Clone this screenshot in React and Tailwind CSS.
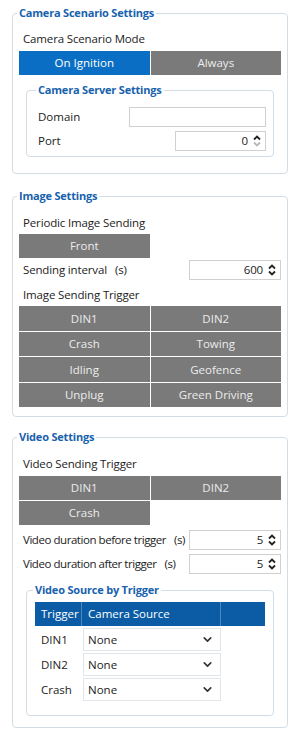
import { ChevronDown } from "lucide-react";

const font = { fontFamily: '"Open Sans", "Noto Sans", sans-serif' };

function Group({ title, className = "", children }) {
  return (
    <fieldset className={`rounded-[4px] border border-[#d3dde4] ${className}`}>
      <legend className="ml-[-2px] px-[2px] text-[11px] font-bold leading-[16px] tracking-[-0.2px] text-[#1862ad]">{title}</legend>
      {children}
    </fieldset>
  );
}

function Btn({ label, active }) {
  return (
    <div
      className={`flex h-[24px] items-center justify-center text-[11.5px] ${
        active ? "bg-[#0a6fc4] text-white" : "bg-[#7a7a7a] text-[#ececec]"
      }`}
    >
      {label}
    </div>
  );
}

function Spin({ value, min, w = "w-[92px]" }) {
  return (
    <div className={`flex h-[20px] ${w} shrink-0 items-center justify-end border border-[#d0d0d0] bg-white pr-[3px] text-[11.5px] text-[#222]`}>
      <span className="mr-[4px]">{value}</span>
      <svg width="10" height="14" viewBox="0 0 10 14">
        <path d="M2 5.5 L5 2.5 L8 5.5" fill="none" stroke="#222" strokeWidth="1.8" />
        <path d="M2 8.5 L5 11.5 L8 8.5" fill="none" stroke={min ? "#b8b8b8" : "#222"} strokeWidth="1.8" />
      </svg>
    </div>
  );
}

function Row({ label, unit, tight, children }) {
  return (
    <div
      className={`flex h-[20px] items-center justify-between pl-[4px] text-[11.5px] text-[#222] ${
        tight ? "tracking-[-0.45px]" : "tracking-[-0.15px]"
      }`}
    >
      <span className="min-w-0 whitespace-nowrap">
        {label}
        {unit && <span className="ml-[8px]">{unit}</span>}
      </span>
      {children}
    </div>
  );
}

function Label({ children, className = "" }) {
  return <div className={`pl-[4px] text-[11.5px] leading-[16px] tracking-[-0.15px] text-[#222] ${className}`}>{children}</div>;
}

function Select() {
  return (
    <div className="flex h-[23px] w-[138px] items-center justify-between border border-[#e2e6ea] bg-white pl-[4px] pr-[6px] text-[11.5px] text-[#222]">
      <span>None</span>
      <ChevronDown size={13} strokeWidth={3} color="#333" />
    </div>
  );
}

export default function App() {
  return (
    <div className="min-h-[744px] w-[300px] bg-white pt-[5px]" style={font}>
      <div className="px-[12px]">
        <Group title="Camera Scenario Settings" className="px-[6px] pb-[16px]">
          <Label className="mt-[10px]">Camera Scenario Mode</Label>
          <div className="mt-[4px] grid grid-cols-2 gap-[1px]">
            <Btn label="On Ignition" active />
            <Btn label="Always" />
          </div>
          <Group title="Camera Server Settings" className="mx-[7px] mt-[7px] pb-[5px] pl-[11px] pr-[7px]">
            <div className="mt-[9px] flex h-[20px] items-center justify-between text-[11.5px] text-[#222]">
              <span>Domain</span>
              <div className="h-[20px] w-[137px] border border-[#d0d0d0] bg-white" />
            </div>
            <div className="mt-[4px] flex items-center justify-between text-[11.5px] text-[#222]">
              <span>Port</span>
              <Spin value="0" min w="w-[91px]" />
            </div>
          </Group>
        </Group>

        <Group title="Image Settings" className="mt-[14px] px-[6px] pb-[9px]">
          <Label className="mt-[11px]">Periodic Image Sending</Label>
          <div className="mt-[3px] grid grid-cols-2 gap-[1px]">
            <Btn label="Front" />
          </div>
          <div className="mt-[2px]">
            <Row label="Sending interval" unit="(s)">
              <Spin value="600" />
            </Row>
          </div>
          <Label className="mt-[7px]">Image Sending Trigger</Label>
          <div className="mt-[3px] grid grid-cols-2 gap-[1px] [&>div]:h-[24.5px]">
            {["DIN1", "DIN2", "Crash", "Towing", "Idling", "Geofence", "Unplug", "Green Driving"].map((l) => (
              <Btn key={l} label={l} />
            ))}
          </div>
        </Group>

        <Group title="Video Settings" className="mt-[12px] px-[6px] pb-[11px]">
          <Label className="mt-[11px]">Video Sending Trigger</Label>
          <div className="mt-[4px] grid grid-cols-2 gap-[1px]">
            <Btn label="DIN1" />
            <Btn label="DIN2" />
            <Btn label="Crash" />
          </div>
          <div className="mt-[5px]">
            <Row label="Video duration before trigger" unit="(s)" tight>
              <Spin value="5" />
            </Row>
          </div>
          <div className="mt-[4px]">
            <Row label="Video duration after trigger" unit="(s)" tight>
              <Spin value="5" />
            </Row>
          </div>
          <Group title="Video Source by Trigger" className="mx-[7px] mt-[8px] px-[8px] pb-[14px]">
            <div className="mt-[4px]">
              <div className="flex h-[24px] bg-[#0b5ca4] text-[11.5px] text-white">
                <div className="flex w-[47px] items-center border-r border-[#4d87bd] pl-[6px]">Trigger</div>
                <div className="flex w-[139px] items-center border-r border-[#4d87bd] pl-[6px]">Camera Source</div>
                <div className="flex-1" />
              </div>
              {["DIN1", "DIN2", "Crash"].map((t) => (
                <div key={t} className="mt-[2px] flex h-[23px] items-center text-[11.5px] text-[#222]">
                  <div className="w-[48px] pl-[6px]">{t}</div>
                  <Select />
                </div>
              ))}
            </div>
          </Group>
        </Group>
      </div>
    </div>
  );
}
